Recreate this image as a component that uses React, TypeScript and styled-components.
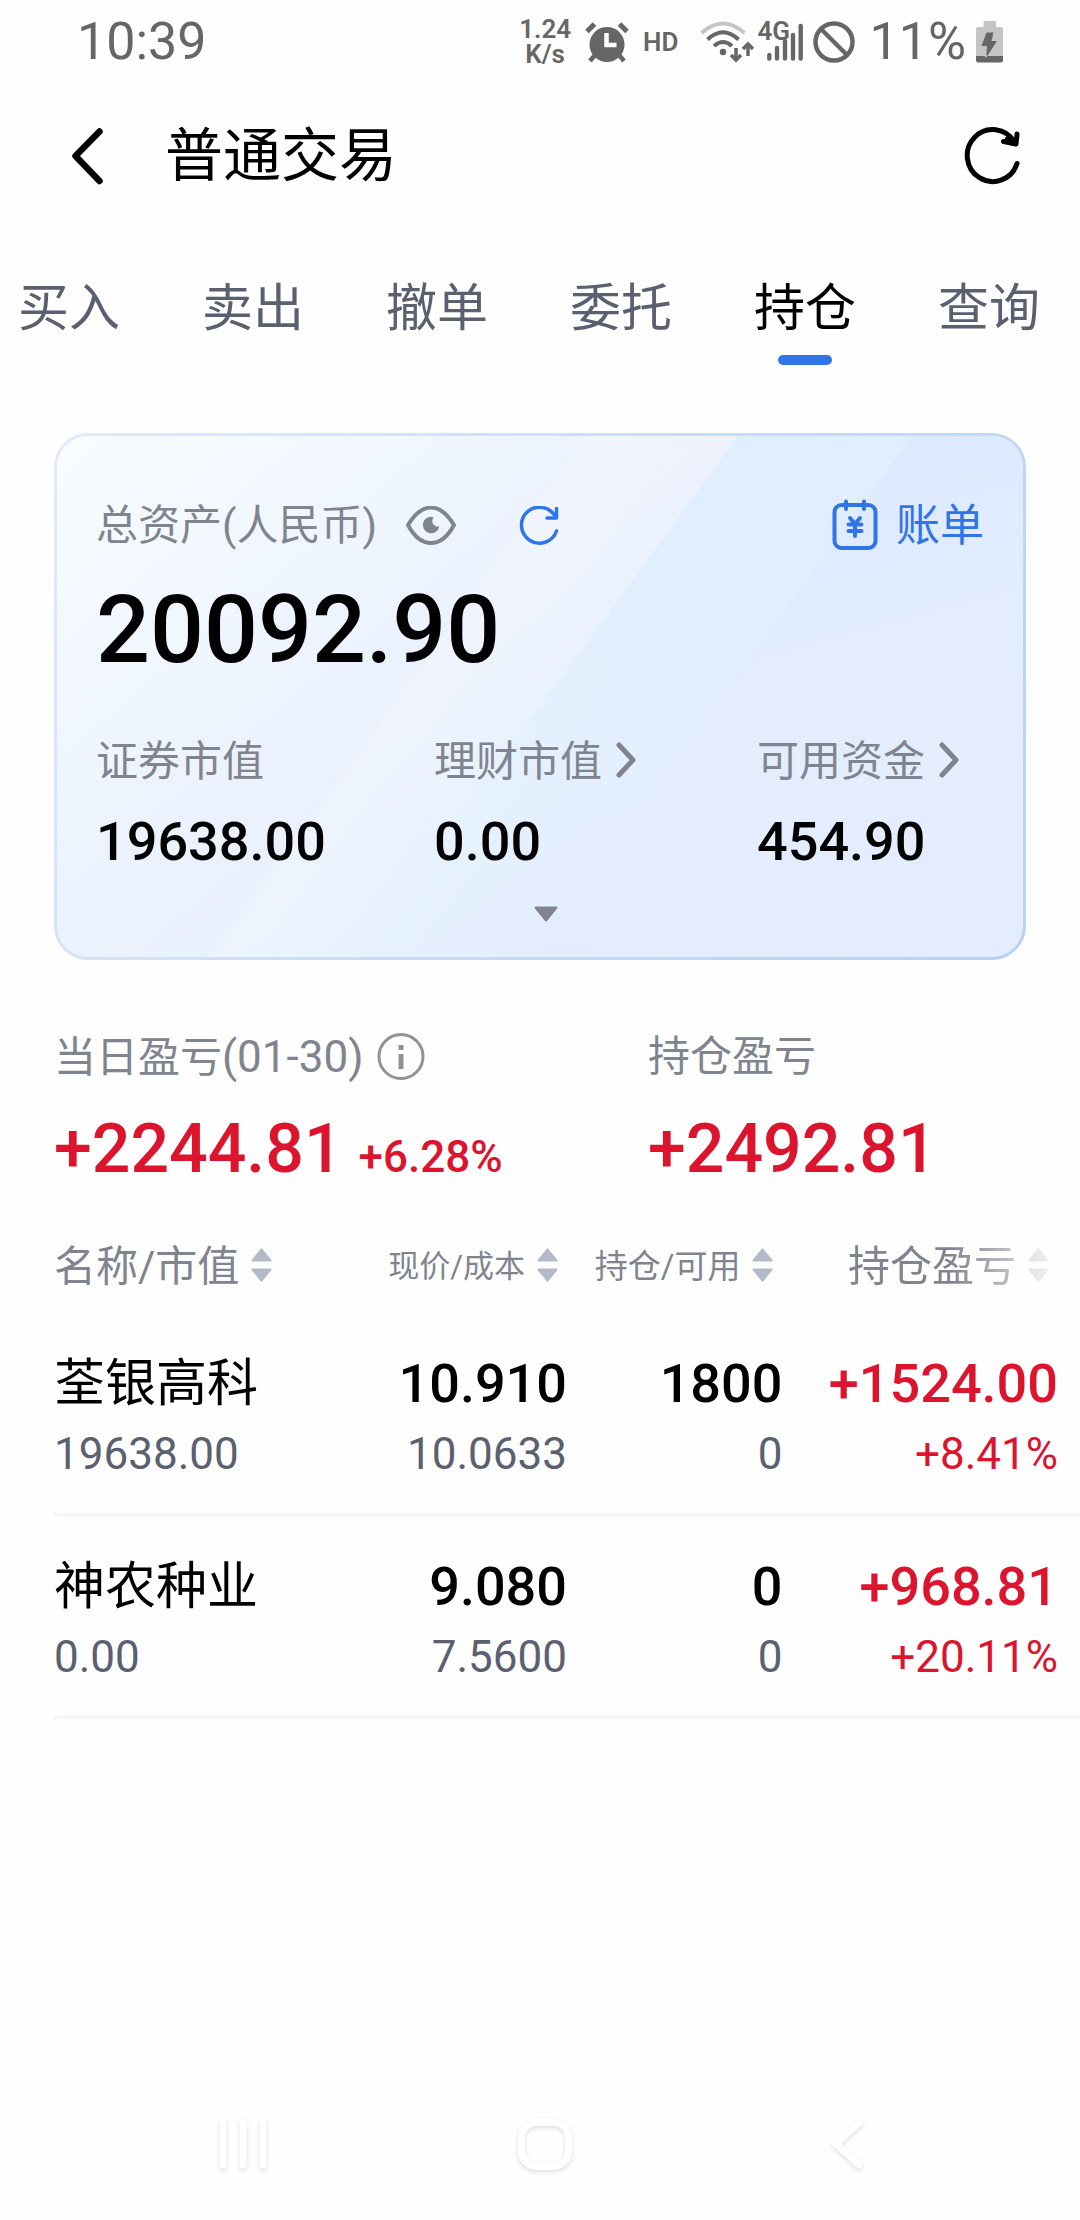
import React from "react";
import styled, { createGlobalStyle } from "styled-components";

const color = {
  page: "#fefefe",
  ink: "#000000",
  status: "#666666",
  tab: "#5b6070",
  label: "#80848f",
  blue: "#2f75e8",
  red: "#dc142d",
  sort: "#b2bac7",
  line: "#f3f5f9",
};

const GlobalStyle = createGlobalStyle`
  * { box-sizing: border-box; }
  body {
    margin: 0;
    background: ${color.page};
    color: ${color.ink};
    font-family: Roboto, "Noto Sans CJK SC", sans-serif;
  }
  button, a {
    margin: 0;
    padding: 0;
    border: 0;
    background: none;
    color: inherit;
    font: inherit;
    text-decoration: none;
    cursor: pointer;
  }
  svg { display: block; flex: none; }
`;

const Page = styled.div`
  display: flex;
  flex-direction: column;
  min-height: 100vh;
  overflow-x: hidden;
`;

/* ---------- status bar ---------- */

const StatusBar = styled.div`
  display: flex;
  align-items: center;
  justify-content: space-between;
  height: 84px;
  padding: 0 77px;
  color: ${color.status};
`;

const StatusText = styled.span`
  font-size: 52px;
  line-height: 60px;
`;

const StatusIcons = styled.div`
  display: flex;
  align-items: center;
  gap: 10px;
`;

const NetSpeed = styled.span`
  margin-right: 4px;
  font-size: 26px;
  line-height: 25px;
  font-weight: 600;
  text-align: center;
  white-space: pre-line;
`;

const HdBadge = styled.span`
  margin: 0 12px 0 4px;
  font-size: 26px;
  line-height: 28px;
  font-weight: 600;
`;

const Radios = styled.div`
  display: flex;
  align-items: center;
  gap: 2px;
`;

const Cellular = styled.div`
  position: relative;
  padding-left: 10px;
`;

const Generation = styled.span`
  position: absolute;
  left: 0;
  top: -6px;
  font-size: 26px;
  line-height: 28px;
  font-weight: 600;
`;

const Battery = styled.div`
  display: flex;
  align-items: center;
  gap: 10px;
  margin-left: 4px;
`;

/* ---------- header and tabs ---------- */

const Header = styled.header`
  display: flex;
  align-items: center;
  height: 144px;
  padding: 0 60px 0 70px;
`;

const Title = styled.h1`
  flex: 1;
  margin: 0 0 0 59px;
  font-size: 58px;
  line-height: 72px;
  font-weight: 400;
`;

const Tabs = styled.nav`
  display: flex;
  justify-content: space-between;
  padding: 50px 40px 0 18px;
`;

const Tab = styled.a<{ $active?: boolean }>`
  display: flex;
  flex-direction: column;
  align-items: center;
  gap: 15px;
  font-size: 51px;
  line-height: 62px;
  color: ${(p) => (p.$active ? color.ink : color.tab)};

  &::after {
    content: "";
    width: 54px;
    height: 10px;
    border-radius: 5px;
    background: ${(p) => (p.$active ? color.blue : "transparent")};
  }
`;

/* ---------- asset card ---------- */

const Card = styled.section`
  position: relative;
  isolation: isolate;
  overflow: hidden;
  margin: 68px 54px 0;
  padding: 54px 39px 31px;
  border: 3px solid transparent;
  border-radius: 34px;
  background:
    linear-gradient(126deg, #ffffff00 39%, #ffffff38 40%, #ffffff00 56%) padding-box,
    linear-gradient(140deg, #f8fcff 0%, #f0f6ff 25%, #ebf1fd 42%, #e5f1fe 56%, #e4edff 70%) padding-box,
    linear-gradient(120deg, #e0eafa 0%, #c9dcf5 50%, #b6d1f7 100%) border-box;

  &::before,
  &::after {
    content: "";
    position: absolute;
    inset: 0;
    z-index: -1;
  }
  &::before {
    clip-path: polygon(70.5% 0, 100% 0, 100% 100%, 31% 100%);
    background: linear-gradient(#e1eefe 20%, #e1eefe00 85%);
  }
  &::after {
    clip-path: polygon(88.5% 0, 100% 0, 100% 100%, 49% 100%);
    background: linear-gradient(165deg, #d7e6ff 10%, #e4edff 58%, #e4edff00 80%);
  }
`;

const CardHead = styled.div`
  display: flex;
  align-items: center;
  height: 72px;
`;

const Label = styled.span`
  font-size: 42px;
  line-height: 56px;
  font-weight: 400;
  color: ${color.label};
`;

const IconButton = styled.button<{ $gap?: number }>`
  margin-left: ${(p) => p.$gap ?? 0}px;
`;

const BillLink = styled.a`
  display: flex;
  align-items: center;
  gap: 18px;
  margin-left: auto;
  font-size: 44px;
  line-height: 56px;
  color: ${color.blue};
`;

const Total = styled.div`
  margin-top: 12px;
  font-size: 95px;
  line-height: 112px;
  font-weight: 500;
`;

const Breakdown = styled.div`
  display: grid;
  grid-template-columns: 338fr 323fr 227fr;
  margin-top: 48px;
`;

const Stat = styled.div`
  display: flex;
  flex-direction: column;
  align-items: flex-start;
  gap: 20px;
  font-size: 54px;
  line-height: 64px;
  font-weight: 500;
`;

const StatLink = styled.button`
  display: flex;
  align-items: center;
  gap: 14px;
  height: 56px;
`;

const Expand = styled.button`
  display: flex;
  justify-content: center;
  align-items: center;
  width: 100%;
  height: 24px;
  margin-top: 28px;
  padding-left: 12px;
`;

/* ---------- profit summary ---------- */

const Summary = styled.section`
  display: grid;
  grid-template-columns: 594fr 378fr;
  margin: 69px 54px 0;
`;

const SummaryLabel = styled.div`
  display: flex;
  align-items: center;
  height: 56px;
`;

const Period = styled.span`
  font-size: 44px;
`;

const Profit = styled.div`
  display: flex;
  align-items: baseline;
  gap: 16px;
  margin-top: 24px;
  font-size: 68px;
  line-height: 80px;
  font-weight: 500;
  color: ${color.red};
`;

const ProfitRate = styled.span`
  font-size: 44px;
  line-height: 52px;
`;

/* ---------- holdings table ---------- */

const Holdings = styled.div`
  padding-left: 54px;
`;

const Table = styled.table`
  width: 100%;
  table-layout: fixed;
  border-collapse: separate;
  border-spacing: 0;
`;

const HeadCell = styled.th<{ $start?: boolean; $size: number; $width: number; $fade?: boolean }>`
  width: ${(p) => p.$width}%;
  padding: 48px ${(p) => (p.$fade ? 31 : p.$start ? 0 : 9)}px 16px 0;
  font-size: ${(p) => p.$size}px;
  line-height: 60px;
  font-weight: 400;
  color: ${color.label};
  mask-image: ${(p) => (p.$fade ? "linear-gradient(to right, #000 56%, transparent)" : "none")};
`;

const SortButton = styled.button<{ $start?: boolean }>`
  display: flex;
  align-items: center;
  justify-content: ${(p) => (p.$start ? "flex-start" : "flex-end")};
  gap: 12px;
  width: 100%;
  white-space: nowrap;
`;

const Cell = styled.td<{ $start?: boolean; $last?: boolean; $gain?: boolean }>`
  padding: 39px ${(p) => (p.$last ? 22 : 0)}px 33px 0;
  border-bottom: 3px solid ${color.line};
  text-align: ${(p) => (p.$start ? "left" : "right")};
  white-space: nowrap;
  color: ${(p) => (p.$gain ? color.red : color.ink)};
`;

const Name = styled.div`
  font-size: 51px;
  line-height: 64px;
`;

const Figure = styled.div`
  font-size: 54px;
  line-height: 64px;
  font-weight: 500;
`;

const SubFigure = styled.div<{ $gain?: boolean }>`
  margin-top: 12px;
  font-size: 44px;
  line-height: 52px;
  color: ${(p) => (p.$gain ? color.red : color.tab)};
`;

/* ---------- system navigation ---------- */

const SystemNav = styled.div`
  display: flex;
  height: 150px;
  margin-top: auto;
  padding: 0 82px 0 92px;
`;

const NavButton = styled.button`
  display: flex;
  flex: 1;
  align-items: center;
  justify-content: center;

  svg { filter: drop-shadow(0 2px 2px rgba(0, 0, 0, 0.13)); }
`;

/* ---------- icons ---------- */

const AlarmIcon = () => (
  <svg width="44" height="42" viewBox="0 0 44 42" fill="none" stroke="currentColor">
    <circle cx="22" cy="23.500" r="17.500" fill="currentColor" stroke="none" />
    <path d="M2 10.500 9.500 3M42 10.500 34.500 3" strokeWidth="5" />
    <path d="M10 34 5 40M34 34l5 6" strokeWidth="4.500" />
    <path d="M21.500 12v12h10" stroke="#fff" strokeWidth="4.500" />
  </svg>
);

const WifiIcon = () => (
  <svg width="55" height="42" viewBox="0 0 55 42" fill="none" stroke="currentColor" strokeWidth="4">
    <path d="M1.500 12Q23 -7 44.500 12" stroke="#c4c4c4" />
    <path d="M7.500 18.500Q23 4 38.500 18.500" />
    <path d="M14 25Q23 17 32 25" />
    <circle cx="23" cy="31" r="3.200" fill="currentColor" stroke="none" />
    <path d="M36 27v10M48 35V26" strokeWidth="3.500" />
    <path d="m31 34 5 5 5-5M43 28l5-5 5 5" strokeWidth="3.500" />
  </svg>
);

const SignalIcon = () => (
  <svg width="36" height="38" viewBox="0 0 36 38" stroke="currentColor" strokeWidth="4.400" strokeLinecap="round">
    <path d="M2.300 32v3.500M10 25v10.500M18 18v17.500M26 12v23.500M33.700 3v32.500" />
  </svg>
);

const BlockIcon = () => (
  <svg width="42" height="42" viewBox="0 0 42 42" fill="none" stroke="currentColor" strokeWidth="4.500">
    <circle cx="21" cy="21" r="18.500" />
    <path d="m8 8 26 26" />
  </svg>
);

const BatteryIcon = () => (
  <svg width="27" height="42" viewBox="0 0 27 42">
    <path d="M7.500 6V1.500Q7.500 0 9 0h9.500Q20 0 20 1.500V6h5q2 0 2 2v27H0V8q0-2 2-2z" fill="#c4c4c4" />
    <path d="M0 35h27v4q0 2.500-2.500 2.500h-22Q0 41.500 0 39z" fill="#666" />
    <path d="M10.500 11.500h7L15.500 20H21L10 37l1-12H5.500z" fill="#666" />
    <path d="M9 34.500h2l-1 2.500z" fill="#fff" />
  </svg>
);

const BackIcon = () => (
  <svg width="36" height="58" viewBox="0 0 36 58" fill="none" stroke="#000" strokeWidth="6.500" strokeLinecap="round" strokeLinejoin="round">
    <path d="M29.500 4.500 5.500 29l24 25" />
  </svg>
);

const ReloadIcon = () => (
  <svg width="56" height="58" viewBox="0 0 56 58" fill="none" stroke="#000" strokeWidth="5" strokeLinecap="round" strokeLinejoin="round">
    <path d="M53 36.500A25.500 26 0 1 1 50.500 15" />
    <path d="m53 7-1 10-12.500-2.500" />
    <path d="m44 12 7 4" strokeWidth="6" />
  </svg>
);

const RefreshIcon = () => (
  <svg width="40" height="40" viewBox="0 0 40 40" fill="none" stroke={color.blue} strokeWidth="3.500" strokeLinecap="round" strokeLinejoin="round">
    <path d="M37.500 25A18 18 0 1 1 36.500 11" />
    <path d="M37.500 2.500V12H28" />
  </svg>
);

const EyeIcon = () => (
  <svg width="50" height="40" viewBox="0 0 50 40" fill="none" stroke={color.label} strokeWidth="4" strokeLinejoin="round">
    <path d="M2 19C6 12.500 14 1.500 25 1.500s19 11 23 17.500C44 26.500 36 37 25 37S6 26.500 2 19z" />
    <path d="M27.500 11a8.300 8.300 0 1 0 5.800 9.500c-5 .8-9-3.500-5.800-9.500z" fill={color.label} stroke="none" />
  </svg>
);

const BillIcon = () => (
  <svg width="46" height="54" viewBox="0 0 46 54" fill="none" stroke={color.blue} strokeWidth="4" strokeLinecap="round">
    <rect x="2.500" y="6" width="41" height="43" rx="7" />
    <path d="M14 2.500v7.500M32 2.500v7.500" />
    <path d="m18 19 5 6 5-6M16.500 25.500h13M16.500 32h13M23 25v12" />
  </svg>
);

const ChevronIcon = () => (
  <svg width="20" height="40" viewBox="0 0 20 40" fill="none" stroke={color.label} strokeWidth="5" strokeLinecap="round" strokeLinejoin="round">
    <path d="M3 3 17 18 3 33" />
  </svg>
);

const ExpandIcon = () => (
  <svg width="24" height="16" viewBox="0 0 24 16" fill={color.label} stroke={color.label} strokeWidth="2" strokeLinejoin="round">
    <path d="M1.500 1.500h21L12 14.500z" />
  </svg>
);

const InfoIcon = () => (
  <svg width="48" height="48" viewBox="0 0 48 48" fill="none" stroke="#909396">
    <circle cx="24" cy="23.500" r="22" strokeWidth="3" />
    <path d="M24 12v5M24 21v15" strokeWidth="5" />
  </svg>
);

const SortIcon = () => (
  <svg width="21" height="38" viewBox="0 0 21 38" fill={color.sort} stroke={color.sort} strokeWidth="2" strokeLinejoin="round">
    <path d="M10.500 1.500 19.500 12.500h-18zM1.500 21.500h18l-9 11z" />
  </svg>
);

const RecentsIcon = () => (
  <svg width="52" height="52" viewBox="0 0 52 52" stroke="#fff" strokeWidth="7" strokeLinecap="round">
    <path d="M6 4v42M26 4v42M46 4v42" />
  </svg>
);

const HomeIcon = () => (
  <svg width="56" height="52" viewBox="0 0 56 52" fill="none" stroke="#fff" strokeWidth="7">
    <rect x="4.500" y="3.500" width="47" height="44" rx="15" />
  </svg>
);

const NavBackIcon = () => (
  <svg width="34" height="52" viewBox="0 0 34 52" fill="none" stroke="#fff" strokeWidth="7" strokeLinecap="round">
    <path d="M29 4 6 25l23 21" />
  </svg>
);

/* ---------- data ---------- */

const tabs = ["买入", "卖出", "撤单", "委托", "持仓", "查询"];

const stats = [
  { label: "证券市值", value: "19638.00", link: false },
  { label: "理财市值", value: "0.00", link: true },
  { label: "可用资金", value: "454.90", link: true },
];

const columns = [
  { title: "名称/市值", size: 42, width: 29 },
  { title: "现价/成本", size: 31, width: 21 },
  { title: "持仓/可用", size: 33, width: 21 },
  { title: "持仓盈亏", size: 42, width: 29 },
];

const holdings = [
  {
    name: "荃银高科",
    value: "19638.00",
    price: "10.910",
    cost: "10.0633",
    held: "1800",
    available: "0",
    profit: "+1524.00",
    rate: "+8.41%",
  },
  {
    name: "神农种业",
    value: "0.00",
    price: "9.080",
    cost: "7.5600",
    held: "0",
    available: "0",
    profit: "+968.81",
    rate: "+20.11%",
  },
];

export default function App() {
  return (
    <Page>
      <GlobalStyle />
      <StatusBar>
        <StatusText>10:39</StatusText>
        <StatusIcons>
          <NetSpeed>{"1.24\nK/s"}</NetSpeed>
          <AlarmIcon />
          <HdBadge>HD</HdBadge>
          <Radios>
            <WifiIcon />
            <Cellular>
              <Generation>4G</Generation>
              <SignalIcon />
            </Cellular>
          </Radios>
          <BlockIcon />
          <Battery>
            <StatusText>11%</StatusText>
            <BatteryIcon />
          </Battery>
        </StatusIcons>
      </StatusBar>

      <Header>
        <IconButton aria-label="返回">
          <BackIcon />
        </IconButton>
        <Title>普通交易</Title>
        <IconButton aria-label="刷新">
          <ReloadIcon />
        </IconButton>
      </Header>

      <Tabs>
        {tabs.map((tab) => (
          <Tab key={tab} href="#" $active={tab === "持仓"} aria-current={tab === "持仓" ? "page" : undefined}>
            {tab}
          </Tab>
        ))}
      </Tabs>

      <main>
        <Card>
          <CardHead>
            <Label>总资产(人民币)</Label>
            <IconButton $gap={29} aria-label="隐藏金额">
              <EyeIcon />
            </IconButton>
            <IconButton $gap={63} aria-label="刷新资产">
              <RefreshIcon />
            </IconButton>
            <BillLink href="#">
              <BillIcon />
              账单
            </BillLink>
          </CardHead>
          <Total>20092.90</Total>
          <Breakdown>
            {stats.map((stat) => (
              <Stat key={stat.label}>
                {stat.link ? (
                  <StatLink>
                    <Label>{stat.label}</Label>
                    <ChevronIcon />
                  </StatLink>
                ) : (
                  <Label>{stat.label}</Label>
                )}
                <span>{stat.value}</span>
              </Stat>
            ))}
          </Breakdown>
          <Expand aria-label="展开">
            <ExpandIcon />
          </Expand>
        </Card>

        <Summary>
          <div>
            <SummaryLabel>
              <Label>
                当日盈亏<Period>(01-30)</Period>
              </Label>
              <IconButton $gap={14} aria-label="说明">
                <InfoIcon />
              </IconButton>
            </SummaryLabel>
            <Profit>
              +2244.81
              <ProfitRate>+6.28%</ProfitRate>
            </Profit>
          </div>
          <div>
            <SummaryLabel>
              <Label>持仓盈亏</Label>
            </SummaryLabel>
            <Profit>+2492.81</Profit>
          </div>
        </Summary>

        <Holdings>
          <Table>
            <thead>
              <tr>
                {columns.map((column, i) => (
                  <HeadCell
                    key={column.title}
                    scope="col"
                    $size={column.size}
                    $width={column.width}
                    $start={i === 0}
                    $fade={i === columns.length - 1}
                  >
                    <SortButton $start={i === 0}>
                      {column.title}
                      <SortIcon />
                    </SortButton>
                  </HeadCell>
                ))}
              </tr>
            </thead>
            <tbody>
              {holdings.map((h) => (
                <tr key={h.name}>
                  <Cell $start>
                    <Name>{h.name}</Name>
                    <SubFigure>{h.value}</SubFigure>
                  </Cell>
                  <Cell>
                    <Figure>{h.price}</Figure>
                    <SubFigure>{h.cost}</SubFigure>
                  </Cell>
                  <Cell>
                    <Figure>{h.held}</Figure>
                    <SubFigure>{h.available}</SubFigure>
                  </Cell>
                  <Cell $last $gain>
                    <Figure>{h.profit}</Figure>
                    <SubFigure $gain>{h.rate}</SubFigure>
                  </Cell>
                </tr>
              ))}
            </tbody>
          </Table>
        </Holdings>
      </main>

      <SystemNav>
        <NavButton aria-label="最近任务">
          <RecentsIcon />
        </NavButton>
        <NavButton aria-label="主屏幕">
          <HomeIcon />
        </NavButton>
        <NavButton aria-label="系统返回">
          <NavBackIcon />
        </NavButton>
      </SystemNav>
    </Page>
  );
}
